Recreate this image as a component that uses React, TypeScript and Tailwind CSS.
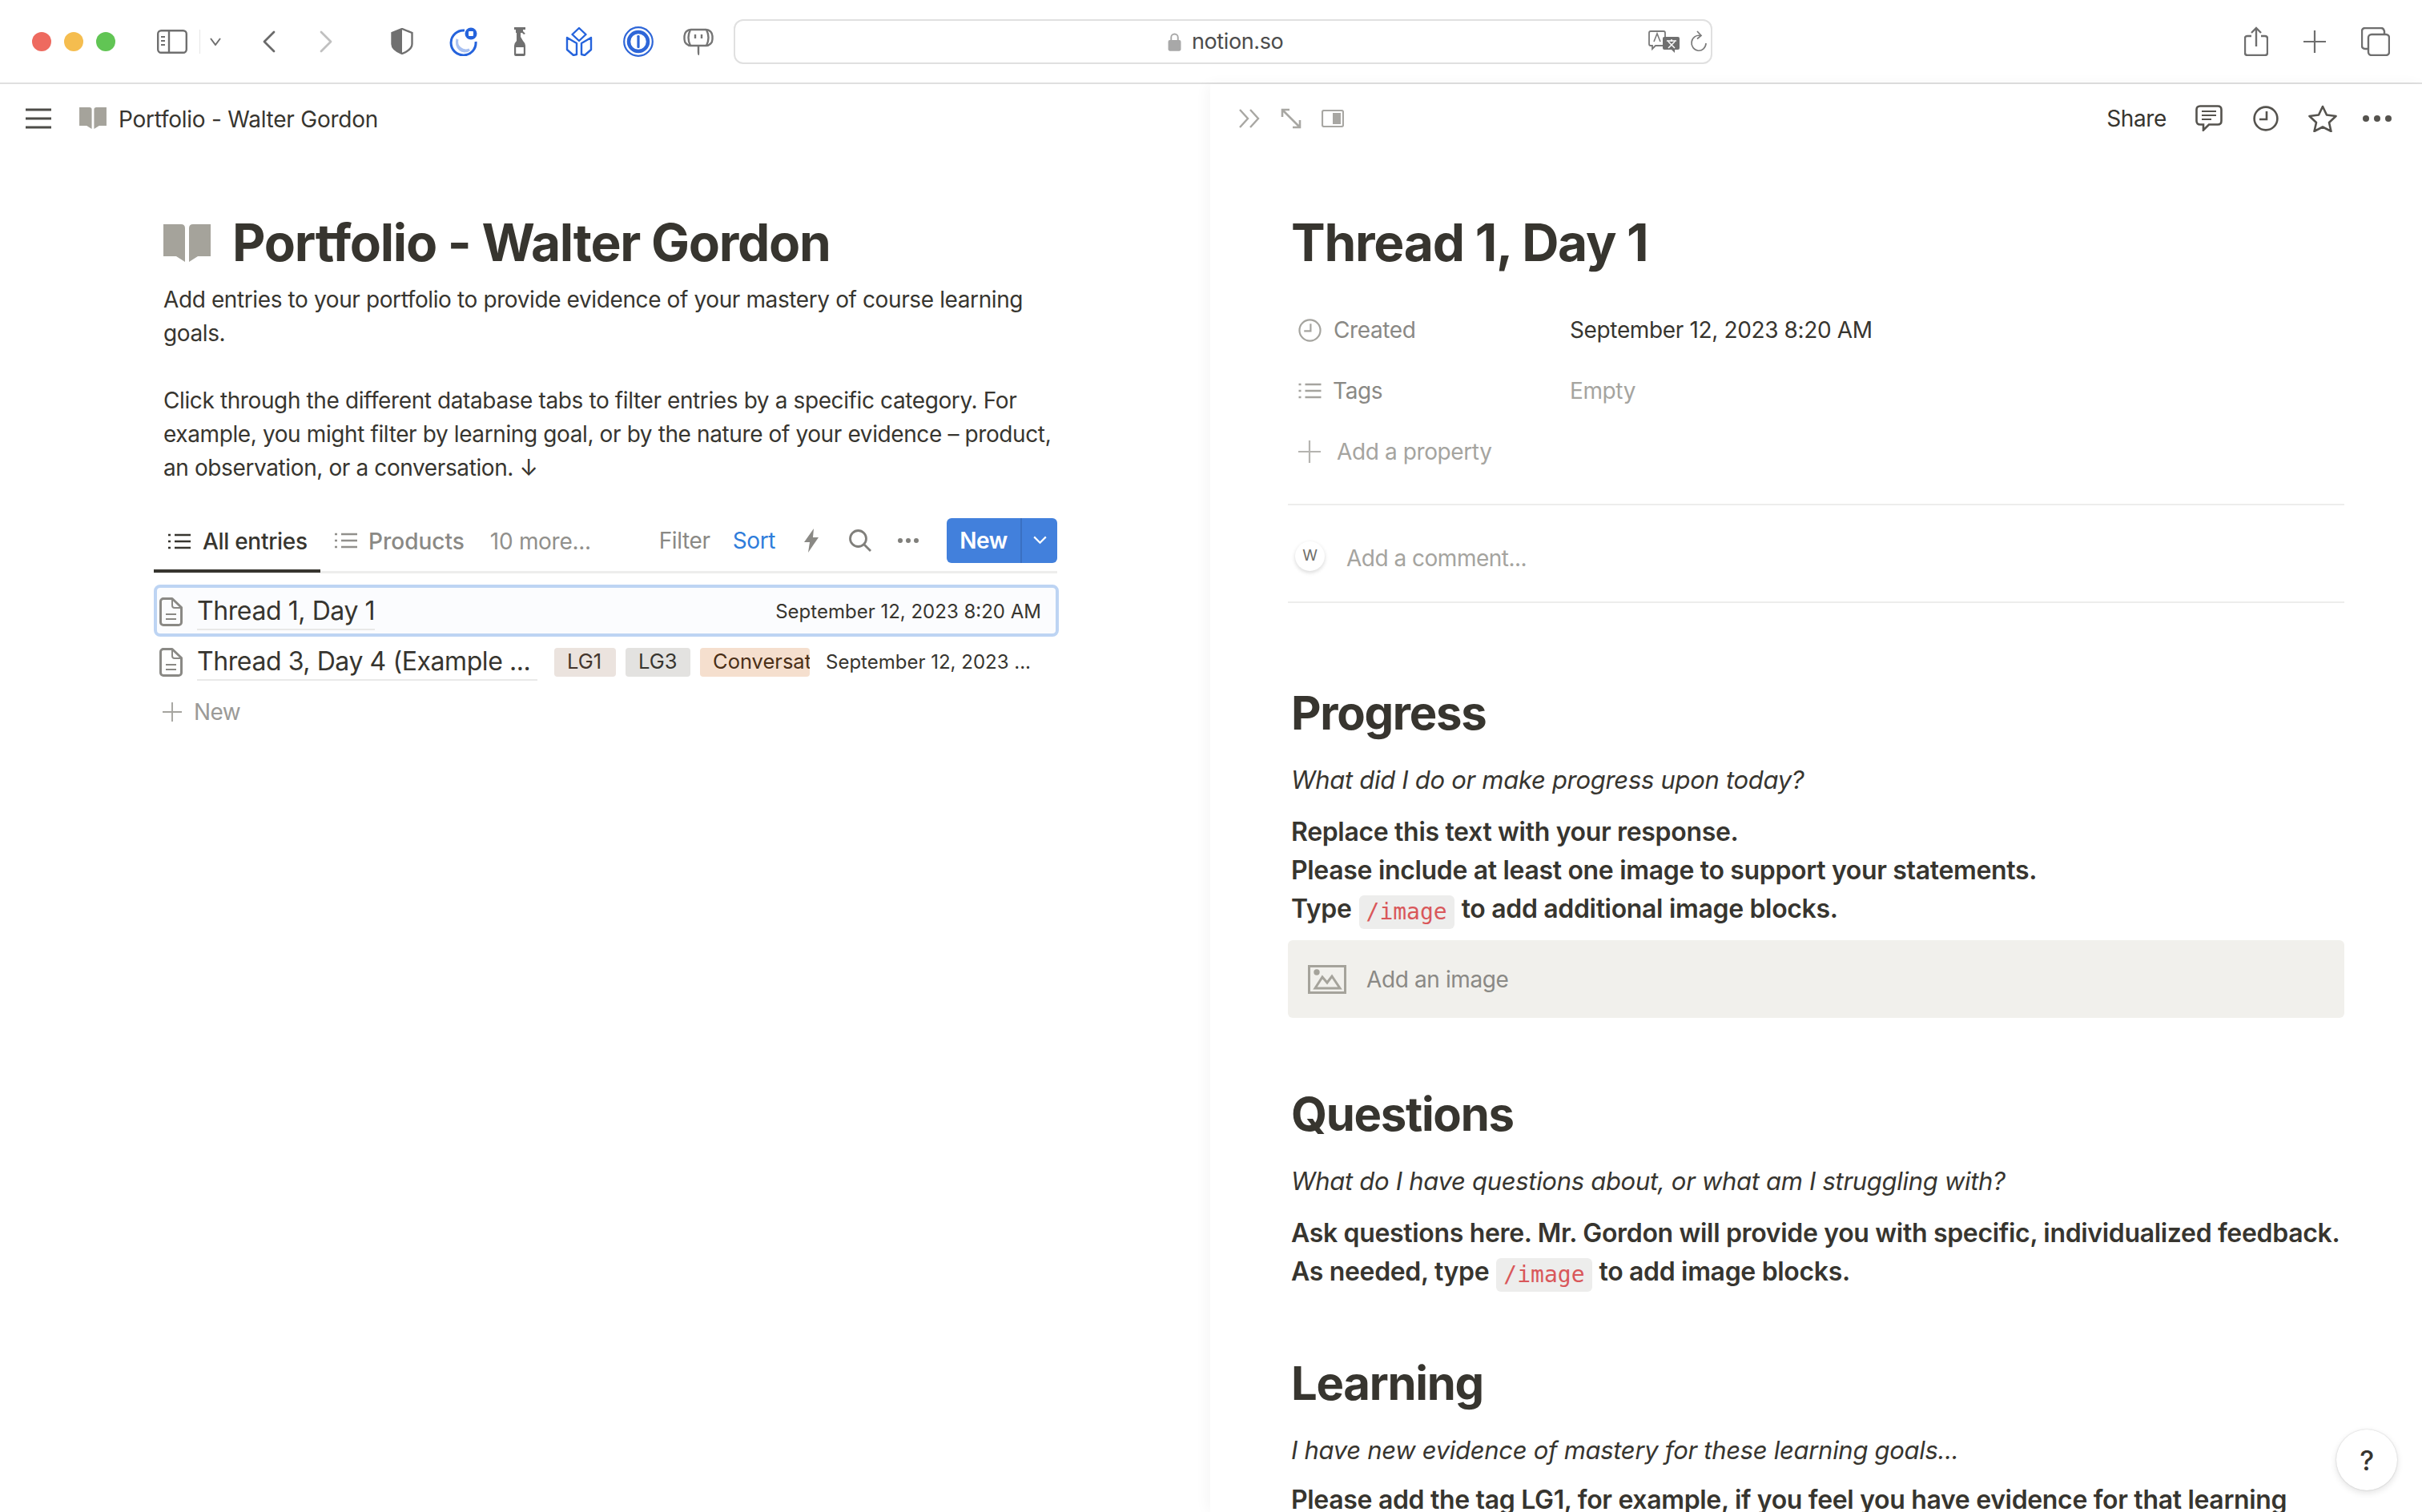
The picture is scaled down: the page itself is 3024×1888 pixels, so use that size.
import type { ReactNode } from 'react';

function Book({ className }: { className: string }) {
  return (
    <svg viewBox="0 0 59 47" className={className} fill="#a5a39b">
      <path d="M0 0h22q5 0 5 5v42l-11-7H0z" />
      <path d="M59 0H37q-5 0-5 5v42l11-7h16z" />
    </svg>
  );
}

function ListIcon({ className, stroke }: { className: string; stroke: string }) {
  return (
    <svg viewBox="0 0 28 22" className={className} fill="none" stroke={stroke} strokeWidth="2.4">
      <path d="M8 3h20M8 11h20M8 19h20" />
      <path d="M0 3h3M0 11h3M0 19h3" />
    </svg>
  );
}

function DocIcon() {
  return (
    <svg viewBox="0 0 29 36" className="h-[36px] w-[29px] shrink-0" fill="none" stroke="#8a8985" strokeWidth="3" strokeLinejoin="round">
      <path d="M4 1.5h12l11.5 11V31a3.5 3.5 0 0 1-3.5 3.5H5A3.5 3.5 0 0 1 1.5 31V5A3.5 3.5 0 0 1 5 1.5z" />
      <path d="M16 1.5V10a3 3 0 0 0 3 3h8M8 21h13M8 27h13" strokeWidth="2" />
    </svg>
  );
}

function Plus({ className, stroke }: { className: string; stroke: string }) {
  return (
    <svg viewBox="0 0 28 28" className={className} fill="none" stroke={stroke} strokeWidth="2.2">
      <path d="M14 0v28M0 14h28" />
    </svg>
  );
}

function ClockIcon({ className, stroke, width }: { className: string; stroke: string; width: number }) {
  return (
    <svg viewBox="0 0 32 32" className={className} fill="none" stroke={stroke} strokeWidth={width}>
      <circle cx="16" cy="16" r="14.4" />
      <path d="M17 7v10H8" />
    </svg>
  );
}

function Tag({ bg, color, w, children }: { bg: string; color: string; w: string; children: ReactNode }) {
  return (
    <span className={`flex h-[36px] shrink-0 items-center overflow-hidden whitespace-nowrap rounded-[4px] pl-[16px] text-[25.5px] tracking-normal ${bg} ${color} ${w}`}>
      {children}
    </span>
  );
}

function Code() {
  return (
    <code className="mx-[9px] inline-block h-[42px] rounded-[6px] bg-[#ededec] px-[9px] align-[-2px] font-['DejaVu_Sans_Mono',monospace] text-[28px] leading-[42px] font-normal tracking-normal text-[#d9575a]">
      /image
    </code>
  );
}

function Browser() {
  return (
    <div className="flex h-[105px] shrink-0 items-center border-b-2 border-[#dfdfdf] bg-white">
      <div className="ml-[40px] flex gap-[16px]">
        <span className="h-[24px] w-[24px] rounded-full bg-[#ee6a5f]" />
        <span className="h-[24px] w-[24px] rounded-full bg-[#f5bd4f]" />
        <span className="h-[24px] w-[24px] rounded-full bg-[#61c554]" />
      </div>
      <svg viewBox="0 0 38 30" className="ml-[52px] h-[30px] w-[38px]" fill="none" stroke="#6f6f6f" strokeWidth="2.4">
        <rect x="1.2" y="1.2" width="35.6" height="27.6" rx="4" />
        <path d="M15 1v28" />
        <path d="M5 9h5M5 14h5M5 19h5" strokeWidth="2" />
      </svg>
      <span className="ml-[15px] h-[30px] w-px bg-[#e6e6e6]" />
      <svg viewBox="0 0 14 10" className="ml-[12px] h-[10px] w-[14px]" fill="none" stroke="#6f6f6f" strokeWidth="2">
        <path d="M1 1l6 8 6-8" />
      </svg>
      <svg viewBox="0 0 17 28" className="ml-[51px] h-[28px] w-[17px]" fill="none" stroke="#6a6a6a" strokeWidth="2.8" strokeLinecap="round" strokeLinejoin="round">
        <path d="M15 2L3 14l12 12" />
      </svg>
      <svg viewBox="0 0 17 28" className="ml-[55px] h-[28px] w-[17px]" fill="none" stroke="#c0c0c0" strokeWidth="2.8" strokeLinecap="round" strokeLinejoin="round">
        <path d="M2 2l12 12L2 26" />
      </svg>
      <svg viewBox="0 0 28 33" className="ml-[72px] h-[33px] w-[28px]">
        <path d="M14 1L1.5 6v14q0 7 12.5 12 12.500-5 12.500-12V6z" fill="none" stroke="#707070" strokeWidth="2.4" />
        <path d="M14 1L1.5 6v14q0 7 12.5 12z" fill="#707070" />
      </svg>
      <svg viewBox="0 0 36 36" className="ml-[44px] h-[36px] w-[36px]">
        <path d="M20 4a15.5 15.5 0 1 0 14 14" fill="none" stroke="#2563dc" strokeWidth="3" />
        <path d="M11 15a10 11 0 0 0 15 13 11 11 0 0 1-15-13z" fill="#a9c1f1" stroke="#a9c1f1" strokeWidth="3" />
        <circle cx="28" cy="8" r="7.5" fill="#2563dc" />
        <rect x="25" y="5" width="6" height="6" rx="1" fill="#fff" />
      </svg>
      <svg viewBox="0 0 16 36" className="ml-[45px] h-[36px] w-[16px]" fill="#707070">
        <path d="M1 0h14v3h-3v2l3 3-2 1-2-2H9v5l3 5q3 3 3 6v11q0 2-2 2H3q-2 0-2-2V23q0-3 3-6V7H3V3H1z" />
        <path d="M3.2 25h9.6v8H3.2z" fill="#fff" />
      </svg>
      <svg viewBox="0 0 36 36" className="ml-[48px] h-[36px] w-[36px]" fill="none" stroke="#2563dc" strokeWidth="2.4" strokeLinejoin="round">
        <path d="M18 1l8.5 8L18 17 9.5 9z" />
        <path d="M3 13l12 7v14l-4 1-8-7zM33 13l-12 7v14l4 1 8-7z" />
      </svg>
      <svg viewBox="0 0 38 38" className="ml-[37px] h-[38px] w-[38px]">
        <circle cx="19" cy="19" r="17.8" fill="none" stroke="#2e66d8" strokeWidth="2.2" />
        <circle cx="19" cy="19" r="12" fill="none" stroke="#2e66d8" strokeWidth="4.5" />
        <rect x="17.4" y="11" width="3.2" height="16" rx="1.2" fill="#2e66d8" />
      </svg>
      <svg viewBox="0 0 38 34" className="ml-[37px] h-[34px] w-[38px]" fill="none" stroke="#757575" strokeWidth="2.4">
        <rect x="1.5" y="2" width="35" height="20" rx="8" />
        <path d="M9 2q-5 10 0 20M29 2q5 10 0 20M15 8v5M23 8v5M19 22v8q0 3 1 3" />
      </svg>
      <div className="ml-[25px] flex h-[56px] w-[1222px] items-center rounded-[12px] border-2 border-[#e0e0e0]">
        <div className="ml-[540px] flex w-[160px] items-center gap-[13px] pt-[1px]">
          <svg viewBox="0 0 16 22" className="h-[24px] w-[17px]">
            <path d="M4 10V6a4 4 0 0 1 8 0v4" fill="none" stroke="#a8a8a8" strokeWidth="1.8" />
            <rect x="0.5" y="9" width="15" height="13" rx="2" fill="#a8a8a8" />
          </svg>
          <span className="text-[27px] text-[#4c4c4c]">notion.so</span>
        </div>
        <svg viewBox="0 0 40 28" className="ml-[440px] h-[28px] w-[40px]">
          <path d="M3 1h16q2 0 2 2v14q0 2-2 2H9l-4 4v-4H3q-2 0-2-2V3q0-2 2-2z" fill="#fff" stroke="#7a7a7a" strokeWidth="1.8" />
          <path d="M7 14l4-10 4 10" fill="none" stroke="#7a7a7a" strokeWidth="1.6" />
          <path d="M20 8h17q2 0 2 2v12q0 2-2 2h-4v4l-4-4h-9q-2 0-2-2V10q0-2 2-2z" fill="#6f6f6f" />
          <path d="M23 13h12M29 11v3M25 22l8-8M33 22l-8-8" stroke="#fff" strokeWidth="1.5" />
        </svg>
        <svg viewBox="0 0 22 28" className="ml-[12px] h-[28px] w-[22px]" fill="none" stroke="#7a7a7a" strokeWidth="1.7">
          <path d="M13 6.5A9 9.500 0 1 0 20 16" />
          <path d="M9 1l5 5.500-5 4" />
        </svg>
      </div>
      <svg viewBox="0 0 30 37" className="ml-[664px] h-[37px] w-[30px]" fill="none" stroke="#6e6e6e" strokeWidth="2.4">
        <path d="M9 12H4q-3 0-3 3v18q0 3 3 3h22q3 0 3-3V15q0-3-3-3h-5" />
        <path d="M15 25V2M9 8l6-6 6 6" />
      </svg>
      <Plus className="ml-[44px] h-[28px] w-[28px]" stroke="#6e6e6e" />
      <svg viewBox="0 0 36 36" className="ml-[44px] h-[36px] w-[36px]" fill="none" stroke="#6e6e6e" strokeWidth="2.4">
        <rect x="9" y="9" width="26" height="26" rx="4" />
        <path d="M9 27H5q-4 0-4-4V5q0-4 4-4h20q3 0 4 4v4" />
      </svg>
    </div>
  );
}

function Portfolio() {
  return (
    <div className="h-full w-[1511px] shrink-0 bg-white">
      <div className="flex h-[85px] items-center">
        <svg viewBox="0 0 32 26" className="ml-[32px] h-[26px] w-[32px]" stroke="#4d4c48" strokeWidth="3.2">
          <path d="M0 2h32M0 13h32M0 24h32" />
        </svg>
        <Book className="ml-[35px] h-[27px] w-[34px]" />
        <span className="ml-[15px] pt-[2px] text-[28px] tracking-[-0.25px] whitespace-nowrap">Portfolio - Walter Gordon</span>
      </div>
      <div className="ml-[204px] w-[1116px]">
        <div className="mt-[77px] flex h-[72px] items-center">
          <Book className="h-[47px] w-[59px]" />
          <h1 className="ml-[27px] text-[64px] font-bold tracking-[-1.25px] whitespace-nowrap">Portfolio - Walter Gordon</h1>
        </div>
        <p className="mt-[14px] text-[28px] leading-[42px]">
          Add entries to your portfolio to provide evidence of your mastery of course learning goals.
        </p>
        <p className="mt-[42px] text-[28px] leading-[42px]">
          Click through the different database tabs to filter entries by a specific category. For example, you might filter by learning goal, or by the nature of your evidence – product, an observation, or a conversation. ↓
        </p>

        <div className="mt-[31px] -ml-[12px] flex h-[80px] w-[1128px] items-center border-b-[3px] border-[#ededec] text-[28px]">
          <div className="flex h-[80px] w-[208px] shrink-0 items-center border-b-4 border-[#37352f] pt-[6px] pl-[18px] font-medium">
            <ListIcon className="h-[22px] w-[28px]" stroke="#37352f" />
            <span className="ml-[15px] tracking-[-0.3px] whitespace-nowrap">All entries</span>
          </div>
          <ListIcon className="ml-[18px] h-[22px] w-[28px]" stroke="#91908c" />
          <span className="ml-[14px] pt-[2px] font-medium tracking-normal whitespace-nowrap text-[#8a8985]">Products</span>
          <span className="ml-[32px] pt-[2px] tracking-[-0.3px] whitespace-nowrap text-[#91908c]">10 more...</span>
          <div className="ml-auto flex shrink-0 items-center">
            <span className="text-[#8a8985]">Filter</span>
            <span className="ml-[28px] text-[#2f7ddb]">Sort</span>
            <svg viewBox="0 0 18 30" className="ml-[36px] h-[30px] w-[18px]" fill="#8a8985">
              <path d="M12 0L0 17h7L5 30l13-19h-7z" />
            </svg>
            <svg viewBox="0 0 28 28" className="ml-[38px] h-[28px] w-[28px]" fill="none" stroke="#807f7b" strokeWidth="2.8">
              <circle cx="11.5" cy="11.5" r="10" />
              <path d="M18.5 18.5L27 27" />
            </svg>
            <svg viewBox="0 0 26 6" className="ml-[33px] h-[6px] w-[26px]" fill="#807f7b">
              <circle cx="3" cy="3" r="3" /><circle cx="13" cy="3" r="3" /><circle cx="23" cy="3" r="3" />
            </svg>
            <div className="ml-[35px] flex h-[56px] w-[138px] shrink-0 overflow-hidden rounded-[6px] bg-[#4280dc] text-white">
              <span className="flex w-[92px] items-center justify-center font-semibold">New</span>
              <span className="flex flex-1 items-center justify-center border-l-2 border-[#3a70c2]">
                <svg viewBox="0 0 18 12" className="h-[11px] w-[17px]" fill="none" stroke="#fff" strokeWidth="2.4">
                  <path d="M1 1.5l8 8 8-8" />
                </svg>
              </span>
            </div>
          </div>
        </div>

        <div className="mt-[14px] -ml-[12px] flex h-[65px] w-[1130px] items-center rounded-[8px] border-[4px] border-[#bdd4f3] bg-[#fbfcfe] pt-[2px] pr-[18px] pl-[3px]">
          <DocIcon />
          <span className="ml-[18px] border-b-2 border-[#e9e9e8] text-[32px] leading-[44px] tracking-[-0.42px] whitespace-nowrap">Thread 1, Day 1</span>
          <span className="ml-auto text-[24px] tracking-normal whitespace-nowrap">September 12, 2023 8:20 AM</span>
        </div>
        <div className="-ml-[12px] flex h-[62px] w-[1130px] items-center pt-[1px] pl-[7px]">
          <DocIcon />
          <span className="ml-[18px] w-[425px] shrink-0 border-b-2 border-[#e9e9e8] text-[32px] leading-[44px] tracking-[-0.42px] whitespace-nowrap">Thread 3, Day 4 (Example ...</span>
          <div className="ml-[21px] flex gap-[12px]">
            <Tag bg="bg-[#ebe3de]" color="text-[#44352c]" w="w-[77px]">LG1</Tag>
            <Tag bg="bg-[#e3e2e0]" color="text-[#37352f]" w="w-[81px]">LG3</Tag>
            <Tag bg="bg-[#f5dfce]" color="text-[#4a2f17]" w="w-[137px]">Conversat</Tag>
          </div>
          <span className="ml-[20px] text-[24px] tracking-normal whitespace-nowrap">September 12, 2023 ...</span>
        </div>
        <div className="-ml-[1px] flex h-[64px] items-center">
          <Plus className="h-[24px] w-[24px]" stroke="#a5a49f" />
          <span className="ml-[15px] text-[28px] tracking-[-0.6px] text-[#9b9a97]">New</span>
        </div>
      </div>
    </div>
  );
}

function Heading({ children, top }: { children: ReactNode; top: string }) {
  return <h2 className={`${top} ml-[4px] h-[72px] text-[58px] leading-[72px] font-bold tracking-[-1.3px] whitespace-nowrap`}>{children}</h2>;
}

function Italic({ children }: { children: ReactNode }) {
  return <p className="mt-[24px] ml-[4px] text-[31px] leading-[48px] tracking-[-0.3px] whitespace-nowrap italic">{children}</p>;
}

function Strong({ children }: { children: ReactNode }) {
  return <p className="ml-[4px] text-[32px] leading-[48px] font-semibold tracking-[-0.33px] whitespace-nowrap">{children}</p>;
}

function Thread() {
  return (
    <div className="relative h-full flex-1 overflow-hidden bg-white shadow-[-4px_0_16px_rgba(0,0,0,0.04)]">
      <div className="flex h-[85px] items-center pr-[38px]">
        <svg viewBox="0 0 26 24" className="ml-[36px] h-[24px] w-[26px]" fill="none" stroke="#a8a7a3" strokeWidth="2.4">
          <path d="M1 1l10 11L1 23M14 1l10 11-10 11" />
        </svg>
        <svg viewBox="0 0 26 26" className="ml-[26px] h-[26px] w-[26px]" fill="none" stroke="#a8a7a3" strokeWidth="2.6">
          <path d="M2 2l22 22M2 11V2h9M24 15v9h-9" />
        </svg>
        <svg viewBox="0 0 28 22" className="ml-[25px] h-[22px] w-[28px]">
          <rect x="1" y="1" width="26" height="20" rx="2" fill="none" stroke="#a8a7a3" strokeWidth="2.2" />
          <rect x="14" y="4" width="10" height="14" fill="#a8a7a3" />
        </svg>
        <span className="ml-auto text-[28px] text-[#37352f]">Share</span>
        <svg viewBox="0 0 34 33" className="ml-[36px] h-[33px] w-[34px]" fill="none" stroke="#55534e" strokeWidth="2.6">
          <path d="M6 1.5h22q4.500 0 4.500 4.500v14q0 4.500-4.500 4.500H17l-7 7v-7H6q-4.500 0-4.500-4.500V6Q1.500 1.500 6 1.500z" />
          <path d="M8 8h18M8 13h18M8 18h12" strokeWidth="2" />
        </svg>
        <ClockIcon className="ml-[38px] h-[32px] w-[32px]" stroke="#55534e" width={2.6} />
        <svg viewBox="0 0 36 34" className="ml-[37px] h-[34px] w-[36px]" fill="none" stroke="#55534e" strokeWidth="2.6" strokeLinejoin="round">
          <path d="M18 2l5 10.500 11.500 1.500-8.500 8 2.500 11L18 27.500 7.500 33 10 22l-8.500-8L13 12.500z" />
        </svg>
        <svg viewBox="0 0 36 8" className="ml-[32px] h-[8px] w-[36px]" fill="#55534e">
          <circle cx="4" cy="4" r="4" /><circle cx="18" cy="4" r="4" /><circle cx="32" cy="4" r="4" />
        </svg>
      </div>

      <div className="ml-[97px] w-[1319px]">
        <h1 className="mt-[77px] ml-[4px] h-[72px] text-[64px] leading-[72px] font-bold tracking-[-1.25px] whitespace-nowrap">Thread 1, Day 1</h1>

        <div className="mt-[35px] flex h-[76px] items-center text-[28px]">
          <ClockIcon className="ml-[13px] h-[29px] w-[29px]" stroke="#a5a49f" width={2.4} />
          <span className="ml-[15px] w-[295px] text-[#8a8985]">Created</span>
          <span className="tracking-[-0.36px]">September 12, 2023 8:20 AM</span>
        </div>
        <div className="flex h-[76px] items-center text-[28px]">
          <ListIcon className="ml-[13px] h-[22px] w-[29px]" stroke="#a5a49f" />
          <span className="ml-[14px] w-[296px] text-[#8a8985]">Tags</span>
          <span className="text-[#a5a49f]">Empty</span>
        </div>
        <div className="flex h-[76px] items-center text-[28px] text-[#a5a49f]">
          <Plus className="ml-[13px] h-[28px] w-[28px]" stroke="#b5b4b0" />
          <span className="ml-[20px]">Add a property</span>
        </div>

        <div className="mt-[27px] flex h-[124px] items-center border-y-2 border-[#ededec] pt-[12px]">
          <span className="-mt-[6px] ml-[9px] flex h-[37px] w-[37px] items-center justify-center rounded-full bg-white text-[19px] text-[#6f6e69] shadow-[0_2px_5px_rgba(15,15,15,0.16)]">W</span>
          <span className="ml-[27px] text-[28px] tracking-[-0.5px] text-[#a5a49f]">Add a comment...</span>
        </div>

        <Heading top="mt-[101px]">Progress</Heading>
        <Italic>What did I do or make progress upon today?</Italic>
        <div className="mt-[17px]">
          <Strong>Replace this text with your response.</Strong>
          <Strong>Please include at least one image to support your statements.</Strong>
          <Strong>Type<Code />to add additional image blocks.</Strong>
        </div>
        <div className="mt-[14px] flex h-[97px] items-center rounded-[6px] bg-[#f1f0ec]">
          <svg viewBox="0 0 48 36" className="ml-[25px] h-[36px] w-[48px]" fill="none" stroke="#a5a39b" strokeWidth="3">
            <rect x="1.500" y="1.500" width="45" height="33" />
            <circle cx="11" cy="9" r="2.200" fill="#a5a39b" />
            <path d="M9 29l9-14 6 7 6-8 10 15z" />
          </svg>
          <span className="ml-[25px] text-[28px] text-[#8a8985]">Add an image</span>
        </div>

        <Heading top="mt-[84px]">Questions</Heading>
        <Italic>What do I have questions about, or what am I struggling with?</Italic>
        <div className="mt-[17px]">
          <Strong>Ask questions here. Mr. Gordon will provide you with specific, individualized feedback.</Strong>
          <Strong>As needed, type<Code />to add image blocks.</Strong>
        </div>

        <Heading top="mt-[78px]">Learning</Heading>
        <Italic>I have new evidence of mastery for these learning goals...</Italic>
        <div className="mt-[14px]">
          <Strong>Please add the tag LG1, for example, if you feel you have evidence for that learning</Strong>
        </div>
      </div>

      <div className="absolute top-[1680px] left-[1406px] flex h-[76px] w-[76px] items-center justify-center rounded-full bg-white text-[34px] font-medium shadow-[0_0_2px_rgba(15,15,15,0.2),0_3px_8px_rgba(15,15,15,0.12)]">?</div>
    </div>
  );
}

export default function App() {
  return (
    <div className="flex h-[1888px] w-[3024px] flex-col overflow-hidden bg-white font-['Inter',sans-serif] tracking-[-0.39px] text-[#37352f]">
      <Browser />
      <div className="flex min-h-0 flex-1">
        <Portfolio />
        <Thread />
      </div>
    </div>
  );
}
